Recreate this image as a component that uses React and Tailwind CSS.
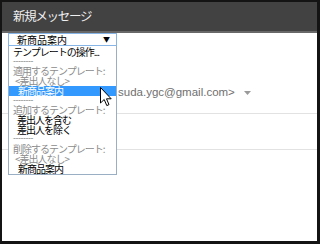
import React from "react";

const jp = { fontFamily: '"Noto Sans CJK JP", "Noto Sans", sans-serif' };
const dash = { fontFamily: '"DejaVu Sans", "Liberation Sans", sans-serif' };

const items = [
  { label: "テンプレートの操作...", tone: "dark", indent: "pl-[4px]" },
  { label: "--------", tone: "rule", indent: "pl-[4px]" },
  { label: "適用するテンプレート:", tone: "muted", indent: "pl-[4px]" },
  { label: "<差出人なし>", tone: "muted", indent: "pl-[6px]" },
  { label: "新商品案内", tone: "dark", indent: "pl-[9px]", active: true },
  { label: "--------", tone: "rule", indent: "pl-[4px]" },
  { label: "追加するテンプレート:", tone: "muted", indent: "pl-[4px]" },
  { label: "差出人を含む", tone: "dark", indent: "pl-[8px]" },
  { label: "差出人を除く", tone: "dark", indent: "pl-[8px]" },
  { label: "--------", tone: "rule", indent: "pl-[4px]" },
  { label: "削除するテンプレート:", tone: "muted", indent: "pl-[4px]" },
  { label: "<差出人なし>", tone: "muted", indent: "pl-[6px]" },
  { label: "新商品案内", tone: "dark", indent: "pl-[9px]" },
];

function TemplateMenu() {
  return (
    <div className="absolute left-[6px] top-0 w-[109px] text-[10px]" style={jp}>
      {/* closed select */}
      <div className="h-[13px] border border-[#86b5e6] bg-white flex items-center justify-between pl-[8px] pr-[6px] leading-none text-black">
        <span>新商品案内</span>
        <span className="text-[7px]">▼</span>
      </div>
      {/* open list */}
      <div className="border border-t-0 border-[#9aaec4] bg-white pt-[1px] pb-[1px]">
        {items.map((it, i) => (
          <div
            key={i}
            style={it.tone === "rule" ? dash : undefined}
            className={
              "h-[9.72px] leading-[9.72px] whitespace-nowrap " +
              (it.tone === "rule" ? "text-[8px] tracking-[-0.4px] " : "tracking-[-1px] ") +
              it.indent +
              " " +
              (it.active
                ? "bg-[#3399ff] text-white"
                : it.tone === "dark"
                ? "text-black"
                : "text-[#8c8c8c]")
            }
          >
            {it.label}
          </div>
        ))}
      </div>
    </div>
  );
}

function Cursor() {
  return (
    <svg
      className="absolute left-[98px] top-[54px]"
      width="12"
      height="20"
      viewBox="0 0 12 20"
    >
      <path
        d="M0.5 0.5 L0.5 16 L4.2 12.5 L6.8 18.6 L9 17.6 L6.5 11.8 L11.2 11.8 Z"
        fill="#fff"
        stroke="#000"
        strokeWidth="1"
      />
    </svg>
  );
}

export default function App() {
  return (
    <div className="w-[320px] h-[244px] bg-white border-t-2 border-l-2 border-r-[3px] border-b-[3px] border-[#141414] flex flex-col overflow-hidden">
      <div className="h-[31px] bg-[#424242] border-b-2 border-[#686868] flex items-center pl-[11px] shrink-0">
        <span className="text-[12.5px] tracking-[-1.3px] text-[#f0f0f0] leading-none" style={jp}>
          新規メッセージ
        </span>
      </div>

      <div className="relative flex-1 flex flex-col">
        <div className="h-[81px] flex items-end pb-[15px] pl-[116px] border-b border-[#e2e2e2]">
          <span
            className="text-[11.5px] leading-[12px] text-[#6f6f6f] whitespace-nowrap"
            style={{ fontFamily: '"Liberation Sans", Arial, sans-serif' }}
          >
            suda.ygc@gmail.com&gt;
          </span>
          <svg className="ml-[9px] mb-[3px]" width="7" height="4" viewBox="0 0 7 4">
            <path d="M0 0 L7 0 L3.5 4 Z" fill="#9a9a9a" />
          </svg>
        </div>
        <div className="h-[36px] border-b border-[#e2e2e2]" />
        <div className="flex-1" />

        <TemplateMenu />
        <Cursor />
      </div>
    </div>
  );
}
